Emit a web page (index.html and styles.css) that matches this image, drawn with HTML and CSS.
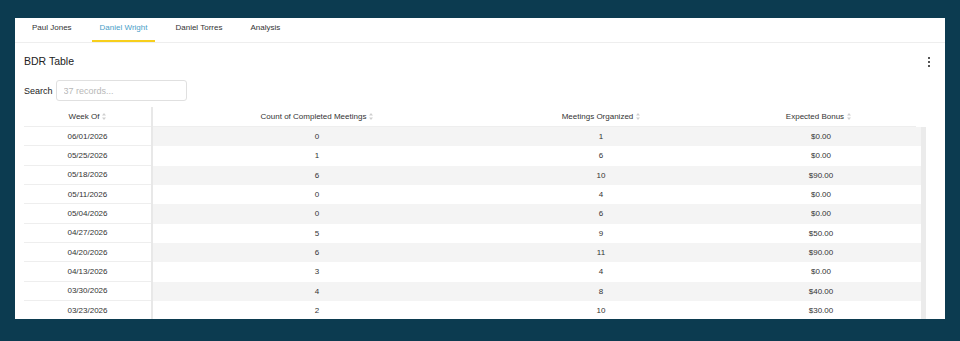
FILE: index.html
```html
<!DOCTYPE html>
<html>
<head>
<meta charset="utf-8">
<link rel="stylesheet" href="styles.css">
</head>
<body>
<div class="panel">
  <div class="tabs">
    <div class="tab">Paul Jones</div>
    <div class="tab active">Daniel Wright</div>
    <div class="tab">Daniel Torres</div>
    <div class="tab">Analysis</div>
  </div>
  <div class="content">
    <div class="title-row">
      <div class="title">BDR Table</div>
      <div class="kebab"><i></i><i></i><i></i></div>
    </div>
    <div class="search-row">
      <label class="search-label">Search</label>
      <input class="search-input" type="text" placeholder="37 records...">
    </div>
    <div class="table">
      <div class="pinned">
        <div class="hcell">Week Of <svg class="sort" viewBox="0 0 4 7"><path d="M2 0L4 2.6H0Z M2 7L4 4.4H0Z"/></svg></div>
        <div class="pcell">06/01/2026</div>
        <div class="pcell">05/25/2026</div>
        <div class="pcell">05/18/2026</div>
        <div class="pcell">05/11/2026</div>
        <div class="pcell">05/04/2026</div>
        <div class="pcell">04/27/2026</div>
        <div class="pcell">04/20/2026</div>
        <div class="pcell">04/13/2026</div>
        <div class="pcell">03/30/2026</div>
        <div class="pcell">03/23/2026</div>
      </div>
      <div class="main">
        <div class="hrow">
          <div class="c2">Count of Completed Meetings <svg class="sort" viewBox="0 0 4 7"><path d="M2 0L4 2.6H0Z M2 7L4 4.4H0Z"/></svg></div>
          <div class="c3">Meetings Organized <svg class="sort" viewBox="0 0 4 7"><path d="M2 0L4 2.6H0Z M2 7L4 4.4H0Z"/></svg></div>
          <div class="c4">Expected Bonus <svg class="sort" viewBox="0 0 4 7"><path d="M2 0L4 2.6H0Z M2 7L4 4.4H0Z"/></svg></div>
        </div>
        <div class="body">
          <div class="rows">
            <div class="row odd"><div class="c2">0</div><div class="c3">1</div><div class="c4">$0.00</div></div>
            <div class="row"><div class="c2">1</div><div class="c3">6</div><div class="c4">$0.00</div></div>
            <div class="row odd"><div class="c2">6</div><div class="c3">10</div><div class="c4">$90.00</div></div>
            <div class="row"><div class="c2">0</div><div class="c3">4</div><div class="c4">$0.00</div></div>
            <div class="row odd"><div class="c2">0</div><div class="c3">6</div><div class="c4">$0.00</div></div>
            <div class="row"><div class="c2">5</div><div class="c3">9</div><div class="c4">$50.00</div></div>
            <div class="row odd"><div class="c2">6</div><div class="c3">11</div><div class="c4">$90.00</div></div>
            <div class="row"><div class="c2">3</div><div class="c3">4</div><div class="c4">$0.00</div></div>
            <div class="row odd"><div class="c2">4</div><div class="c3">8</div><div class="c4">$40.00</div></div>
            <div class="row"><div class="c2">2</div><div class="c3">10</div><div class="c4">$30.00</div></div>
          </div>
          <div class="scrollbar"></div>
        </div>
      </div>
    </div>
  </div>
</div>
</body>
</html>
```

FILE: styles.css
```css
* { box-sizing: border-box; }
html, body { margin: 0; }
body {
  width: 960px;
  height: 341px;
  overflow: hidden;
  background: #0c3b50;
  padding: 18px 15px 0 15px;
  font-family: "Liberation Sans", Arial, sans-serif;
  color: #333;
}
.panel {
  width: 930px;
  height: 301px;
  background: #fff;
  overflow: hidden;
}
.tabs {
  display: flex;
  height: 25px;
  padding-left: 9px;
  border-bottom: 1px solid #eeeeee;
  gap: 12px;
}
.tab {
  font-size: 8px;
  line-height: 20px;
  padding: 0 8px 2px 8px;
  border-bottom: 2px solid transparent;
  color: #333;
}
.tab.active {
  color: #4aa0c8;
  border-bottom-color: #f7cf1c;
}
.content {
  padding: 0 16px 0 9px;
}
.title-row {
  display: flex;
  justify-content: space-between;
  align-items: center;
  height: 14px;
  margin-top: 11px;
}
.title {
  font-size: 10.5px;
  color: #222;
}
.kebab {
  display: flex;
  flex-direction: column;
  gap: 2px;
  margin-right: -1px;
  margin-top: 2px;
}
.kebab i {
  display: block;
  width: 2px;
  height: 2px;
  background: #555;
}
.search-row {
  display: flex;
  align-items: center;
  gap: 3px;
  margin-top: 12px;
}
.search-label {
  font-size: 9px;
  color: #222;
}
.search-input {
  width: 131px;
  height: 21px;
  border: 1px solid #e0e0e0;
  border-radius: 3px;
  padding: 0 0 0 7px;
  font-family: inherit;
  font-size: 9px;
  color: #333;
  outline: none;
}
.search-input::placeholder { color: #b8b8b8; }
.table {
  display: flex;
  margin-top: 6px;
  width: 902px;
}
.pinned {
  width: 129px;
  border-right: 2px solid #e8e8e8;
  flex: none;
}
.hcell, .hrow > div {
  font-size: 8px;
  color: #333;
  display: flex;
  align-items: center;
  justify-content: center;
  gap: 3px;
}
.hcell {
  height: 20px;
  border-bottom: 1px solid #eeeeee;
}
.sort {
  width: 4px;
  height: 7px;
  fill: #d0d0d0;
}
.pcell {
  height: 19.33px;
  border-bottom: 1px solid #eeeeee;
  font-size: 8px;
  display: flex;
  align-items: center;
  justify-content: center;
}
.main {
  flex: 1;
  display: flex;
  flex-direction: column;
}
.hrow {
  display: flex;
  height: 20px;
  width: 763px;
  border-bottom: 1px solid #eeeeee;
}
.c2 { width: 328px; }
.c3 { width: 240px; }
.c4 { width: 200px; }
.hrow .c4 { width: 195px; }
.body {
  display: flex;
}
.rows {
  width: 768px;
}
.row {
  display: flex;
  height: 19.33px;
  font-size: 8px;
}
.row > div {
  display: flex;
  align-items: center;
  justify-content: center;
}
.row.odd { background: #f4f4f4; }
.scrollbar {
  width: 5px;
  background: #ebebeb;
}
```
